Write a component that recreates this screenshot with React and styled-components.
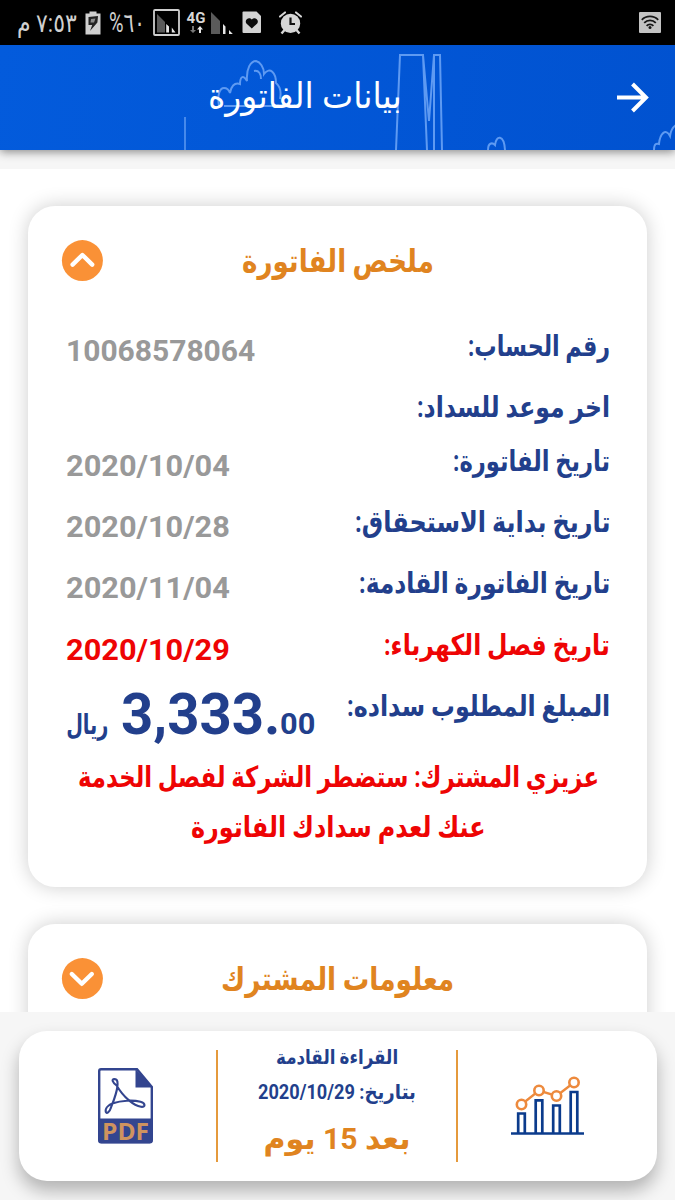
import React, { useLayoutEffect, useRef, useState } from 'react';
import { styled, createGlobalStyle } from 'styled-components';

const colors = {
	blue: '#223f8c',
	red: '#ee0404',
	grey: '#999999',
	orange: '#e08420',
	badge: '#fa9136',
};

const rows = [
	{ label: 'رقم الحساب:', labelWidth: 142, value: '10068578064', valueWidth: 189, height: 61 },
	{ label: 'اخر موعد للسداد:', labelWidth: 193, height: 54 },
	{ label: 'تاريخ الفاتورة:', labelWidth: 157, value: '2020/10/04', valueWidth: 163.5, height: 61 },
	{ label: 'تاريخ بداية الاستحقاق:', labelWidth: 255, value: '2020/10/28', valueWidth: 163.5, height: 61 },
	{ label: 'تاريخ الفاتورة القادمة:', labelWidth: 251, value: '2020/11/04', valueWidth: 163.5, height: 62 },
	{ label: 'تاريخ فصل الكهرباء:', labelWidth: 226, value: '2020/10/29', valueWidth: 163.5, height: 61, alert: true },
];

// squeezes or widens one line of text so that it takes exactly `width` pixels
const FitText = ({ width, ltr, children }) => {
	const ref = useRef(null);
	const [scale, setScale] = useState(1);

	useLayoutEffect(() => {
		setScale(width / ref.current.offsetWidth);
	}, [width]);

	return (
		<FitBox $width={width} dir={ltr ? 'ltr' : 'rtl'}>
			<FitInner ref={ref} $ltr={ltr} style={{ transform: `scaleX(${scale})` }}>
				{children}
			</FitInner>
		</FitBox>
	);
};

const SignalIcon = () => (
	<svg width="27" height="27" viewBox="0 0 27 27">
		<rect x="1" y="1" width="25" height="25" rx="1" fill="none" stroke="#cfcfcf" strokeWidth="1.8" />
		<path d="M4 5 L12 13 V23.5 H4Z" fill="#5a5a5a" />
		<path d="M13.2 15 L16 17.5 V23.5 H13.2Z M18.8 18.5 L22.5 23.5 H18.8Z" fill="#e6e6e6" />
	</svg>
);

const PlainSignalIcon = () => (
	<svg width="23" height="24" viewBox="0 0 23 24">
		<path d="M0 1 L9 10 V23 H0Z" fill="#5a5a5a" />
		<path d="M12 13 L14.5 15.5 V23 H12Z M18 19 L21.8 23 H18Z" fill="#e6e6e6" />
	</svg>
);

const BatteryIcon = () => (
	<svg width="16" height="24" viewBox="0 0 16 24">
		<path d="M4.5 0.5 h7 v2 h4 v21 H0.5 V2.5 h4Z" fill="#cfcfcf" />
		<path d="M3.5 6 L13 5 L12.4 11.5 L5 20 L7.2 14 H3.5Z" fill="#222" />
		<path d="M6 8 L10.5 7.4 L9 11.5 H5.5Z" fill="#8b8b8b" />
	</svg>
);

const HeartCardIcon = () => (
	<svg width="20" height="23" viewBox="0 0 20 23">
		<path d="M1.5 0.5 H14.5 L19 5 V21 Q19 22 18 22 H1.5 Q0.5 22 0.5 21 V1.5 Q0.5 0.5 1.5 0.5Z" fill="#d2d2d2" />
		<path d="M9.8 17.5 L4.4 12.4 C2 9.2 6.8 5 9.8 8.4 C12.8 5 17.6 9.2 15.2 12.4Z" fill="#0a0a0a" />
	</svg>
);

const AlarmIcon = () => (
	<svg width="23" height="24" viewBox="0 0 23 24">
		<path d="M1 5.6 L6 1.4 M22 5.6 L17 1.4" stroke="#d6d6d6" strokeWidth="2" strokeLinecap="round" />
		<path d="M5.5 19 L2.5 22.5 M17.5 19 L20.5 22.5" stroke="#d6d6d6" strokeWidth="2.4" />
		<circle cx="11.5" cy="12.4" r="9.7" fill="#d6d6d6" />
		<path d="M11.5 6.5 V13 H16" fill="none" stroke="#111" strokeWidth="2.2" />
	</svg>
);

const WifiIcon = () => (
	<svg width="22" height="21" viewBox="0 0 22 21">
		<rect width="22" height="21" rx="1" fill="#c3c3c3" />
		<g fill="none" stroke="#161616" strokeWidth="1.8">
			<path d="M2.8 7.8 C7.2 3.2 14.8 3.2 19.2 7.8" />
			<path d="M5.2 10.9 C8.4 7.5 13.6 7.5 16.8 10.9" />
			<path d="M7.6 13.8 C9.5 11.8 12.5 11.8 14.4 13.8" />
		</g>
		<circle cx="11" cy="15.6" r="1.5" fill="#161616" />
	</svg>
);

const Skyline = () => (
	<SkylineSvg viewBox="0 0 675 105">
		<g fill="none" stroke="#5e9af2" strokeWidth="2">
			<path d="M185 72 V105" strokeWidth="1.5" />
			<path d="M219 61 C217 49 220 43 224 43 C227 43 229 45 230 48 C231 42 234 37 240 39 C240 32 243 29 247 36 C246 23 251 16 256 16 C260 17 264 22 264 29 C270 21 276 28 276 38 C281 42 281 49 280 54 M254 26 C259 25 261 29 261 34 M224 61 H278" />
			<path d="M396 105 L400 10 H423 L427 105 M423 10 L429 76 L434 10 H440 L442 105 M434 10 V105" />
			<path d="M488 105 C488 98 492 97 495 100 C496 90 504 89 505 105" />
			<path d="M654 105 C654 99 656 98 659 99 C660 88 666 83 670 91 C671 84 673 82 676 80" />
		</g>
	</SkylineSvg>
);

const ArrowIcon = () => (
	<svg width="33" height="32" viewBox="0 0 33 32">
		<path d="M1 15.5 H29.5 M16.5 2 L30 15.5 L16.5 29" fill="none" stroke="#fff" strokeWidth="4" />
	</svg>
);

const ToggleIcon = ({ open }) => (
	<svg width="42" height="42" viewBox="0 0 42 42">
		<circle cx="21.4" cy="20.6" r="20.5" fill={colors.badge} />
		<path
			d={open ? 'M11.6 24.6 L21.4 15 L31.2 24.6' : 'M10.8 16 L20.8 25.8 L30.8 16'}
			fill="none"
			stroke="#fff"
			strokeWidth="4.4"
			strokeLinecap="round"
			strokeLinejoin="round"
		/>
	</svg>
);

const PdfIcon = () => (
	<svg width="55" height="84" viewBox="0 -4 55 84">
		<path
			d="M3 1.2 H39 L53.8 19 V72 Q53.8 74.3 51.8 74.3 H3 Q1.2 74.3 1.2 72 V3 Q1.2 1.2 3 1.2Z"
			fill="#fff"
			stroke="#33458f"
			strokeWidth="2.4"
		/>
		<path d="M37.5 1 L54.5 19.5 H37.5Z" fill="#33458f" />
		<path d="M0.5 50.5 H54.5 V72.5 Q54.5 75.2 51.5 75.2 H3.5 Q0.5 75.2 0.5 72.5Z" fill="#33458f" />
		<path
			d="M18.6 17.5 C14 14 13.5 11.3 16.3 11 C20 11 19.8 15 19.3 19 C18.5 26 15.5 33 12.8 40 C11.5 44.5 8.5 46 7.8 44 C6.8 40 11 36.8 15 35.3 C23 32.5 35 31.8 42.5 33.8 C48 35.5 47.5 39.5 43 38.8 C36 37.5 26 30 18.6 17.5Z"
			fill="none"
			stroke="#33458f"
			strokeWidth="2.1"
		/>
		<text x="27.5" y="71.5" textAnchor="middle" textLength="47" lengthAdjust="spacingAndGlyphs">
			PDF
		</text>
	</svg>
);

const ChartIcon = () => (
	<svg width="73" height="60" viewBox="0 0 73 60">
		<g fill="none" stroke="#0b3b8c" strokeWidth="2.7">
			<path d="M0 57.5 H73" />
			<path d="M7.2 57 V37.5 H13.8 V57 M24.7 57 V24.3 H31.3 V57 M42.2 57 V29.5 H48.8 V57 M59.7 57 V16 H66.3 V57" />
		</g>
		<path d="M10.5 28.5 L28 14.5 L45.5 20 L63 6.5" fill="none" stroke="#ed8a3d" strokeWidth="2.4" />
		<g fill="#fff" stroke="#ed8a3d" strokeWidth="2.6">
			<circle cx="10.5" cy="28.5" r="4.7" />
			<circle cx="28" cy="14.5" r="4.7" />
			<circle cx="45.5" cy="20" r="4.7" />
			<circle cx="63" cy="6.5" r="4.7" />
		</g>
	</svg>
);

const App = () => {
	return (
		<Screen>
			<GlobalStyle />

			<StatusBar>
				<StatusGroup>
					<StatusText $size={26} $ml={17}>
						<FitText width={60}>٧:٥٣ م</FitText>
					</StatusText>
					<BatteryIcon />
					<StatusText $size={27}>
						<FitText width={36} ltr>
							%٦٠
						</FitText>
					</StatusText>
					<SignalIcon />
					<Network>
						4G
						<svg width="13" height="9" viewBox="0 0 13 9">
							<path d="M3 7 L0 4 H2 V0 H4 V4 H6Z" fill="#777" />
							<path d="M10 0 L13 3.4 H11 V7 H9 V3.4 H7Z" fill="#e6e6e6" />
						</svg>
					</Network>
					<PlainSignalIcon />
					<HeartCardIcon />
					<AlarmIcon />
				</StatusGroup>
				<WifiIcon />
			</StatusBar>

			<Header>
				<Skyline />
				<HeaderTitle>
					<FitText width={194}>بيانات الفاتورة</FitText>
				</HeaderTitle>
				<ArrowIcon />
			</Header>

			<Content>
				<Card>
					<CardHead>
						<ToggleIcon open />
						<CardTitle>
							<FitText width={192}>ملخص الفاتورة</FitText>
						</CardTitle>
					</CardHead>

					{rows.map((row) => (
						<Row key={row.label} $height={row.height} $alert={row.alert}>
							<Label>
								<FitText width={row.labelWidth}>{row.label}</FitText>
							</Label>
							{row.value && (
								<Value>
									<FitText width={row.valueWidth} ltr>
										{row.value}
									</FitText>
								</Value>
							)}
						</Row>
					))}

					<Row $height={61}>
						<Label>
							<FitText width={263}>المبلغ المطلوب سداده:</FitText>
						</Label>
						<Amount>
							<Currency>
								<FitText width={42}>ريال</FitText>
							</Currency>
							<Whole>
								<FitText width={159} ltr>
									3,333.
								</FitText>
							</Whole>
							<Fraction>
								<FitText width={35} ltr>
									00
								</FitText>
							</Fraction>
						</Amount>
					</Row>

					<Warning>
						<FitText width={521}>عزيزي المشترك: ستضطر الشركة لفصل الخدمة</FitText>
						<FitText width={295}>عنك لعدم سدادك الفاتورة</FitText>
					</Warning>
				</Card>

				<Card>
					<CardHead>
						<ToggleIcon />
						<CardTitle>
							<FitText width={233}>معلومات المشترك</FitText>
						</CardTitle>
					</CardHead>
				</Card>
			</Content>

			<Footer>
				<FooterCard>
					<FooterCell>
						<PdfIcon />
					</FooterCell>
					<Reading>
						<ReadingLine>
							<FitText width={122}>القراءة القادمة</FitText>
						</ReadingLine>
						<ReadingLine>
							<FitText width={158}>بتاريخ: 2020/10/29</FitText>
						</ReadingLine>
						<Remaining>
							<FitText width={147}>بعد 15 يوم</FitText>
						</Remaining>
					</Reading>
					<FooterCell>
						<ChartIcon />
					</FooterCell>
				</FooterCard>
			</Footer>
		</Screen>
	);
};

const GlobalStyle = createGlobalStyle`
	* {
		box-sizing: border-box;
	}
	body {
		margin: 0;
		overflow: hidden;
		background: #fff;
		font-family: Roboto, 'DejaVu Sans', sans-serif;
	}
	svg {
		display: block;
		flex-shrink: 0;
	}
`;

const FitBox = styled.span`
	display: block;
	width: ${({ $width }) => $width}px;
	white-space: nowrap;
`;

const FitInner = styled.span`
	display: inline-block;
	transform-origin: ${({ $ltr }) => ($ltr ? 'left' : 'right')} center;
`;

const Screen = styled.div`
	width: 675px;
	height: 1200px;
	display: flex;
	flex-direction: column;
	overflow: hidden;
	background: #f6f6f6;
`;

const StatusBar = styled.div`
	height: 45px;
	flex-shrink: 0;
	display: flex;
	align-items: center;
	justify-content: space-between;
	padding-right: 14px;
	background: #000;
`;

const StatusGroup = styled.div`
	display: flex;
	align-items: center;
	gap: 8px;

	& > svg:last-child {
		margin-left: 9px;
	}
`;

const StatusText = styled.div`
	margin-left: ${({ $ml = 0 }) => $ml}px;
	font-size: ${({ $size }) => $size}px;
	line-height: 40px;
	color: #d0d0d0;
`;

const Network = styled.div`
	width: 20px;
	margin: 0 -3px 0 -2px;
	display: flex;
	flex-direction: column;
	align-items: center;
	font-size: 15px;
	font-weight: 700;
	line-height: 14px;
	color: #d8d8d8;

	svg {
		margin-top: 1px;
	}
`;

const Header = styled.header`
	position: relative;
	z-index: 2;
	height: 105px;
	flex-shrink: 0;
	display: flex;
	align-items: center;
	justify-content: space-between;
	padding: 0 26px 0 208px;
	background: linear-gradient(100deg, #035bdc, #0152d0);
	box-shadow: 0 2px 9px rgba(0, 0, 0, 0.45);
`;

const SkylineSvg = styled.svg`
	position: absolute;
	inset: 0;
	width: 675px;
	height: 105px;
`;

const HeaderTitle = styled.div`
	position: relative;
	padding-bottom: 2px;
	font-size: 35px;
	line-height: 60px;
	color: #fff;
`;

const Content = styled.main`
	height: 843px;
	margin-top: 19px;
	flex-shrink: 0;
	padding: 37px 28px 0;
	display: flex;
	flex-direction: column;
	gap: 37px;
	overflow: hidden;
	background: #fff;
`;

const Card = styled.section`
	height: 681px;
	flex-shrink: 0;
	padding: 34px 37px 0 38px;
	background: #fff;
	border-radius: 27px;
	box-shadow: 0 0 20px rgba(0, 0, 0, 0.2);
`;

const CardHead = styled.div`
	height: 77px;
	margin-left: -5px;
	display: flex;
	align-items: flex-start;
`;

const CardTitle = styled.h2`
	flex: 1;
	display: flex;
	justify-content: center;
	margin: 0 38px 0 0;
	font-size: 32px;
	line-height: 42px;
	color: ${colors.orange};
`;

const Row = styled.div`
	height: ${({ $height }) => $height}px;
	display: flex;
	flex-direction: row-reverse;
	align-items: flex-start;
	justify-content: space-between;
	color: ${({ $alert }) => ($alert ? colors.red : colors.blue)};

	& > div:last-child {
		color: ${({ $alert }) => $alert && colors.red};
	}
`;

const Label = styled.div`
	font-size: 29px;
	font-weight: 700;
	line-height: 58px;
`;

const Value = styled.div`
	padding-top: 4px;
	font-size: 29.5px;
	font-weight: 700;
	line-height: 60px;
	color: ${colors.grey};
`;

const Amount = styled.div`
	display: flex;
	align-items: baseline;
	padding-top: 4px;
	font-weight: 700;
	line-height: 68px;
`;

const Currency = styled.div`
	margin-right: 13px;
	font-size: 28px;
`;

const Whole = styled.div`
	font-size: 57px;
`;

const Fraction = styled.div`
	font-size: 29px;
`;

const Warning = styled.div`
	margin: 14px 0 0 1px;
	display: flex;
	flex-direction: column;
	align-items: center;
	font-size: 29px;
	font-weight: 700;
	line-height: 50px;
	color: ${colors.red};
`;

const Footer = styled.footer`
	flex: 1;
	padding: 19px 18px 19px 19px;
`;

const FooterCard = styled.div`
	height: 150px;
	display: grid;
	grid-template-columns: 197px 242px 1fr;
	align-items: center;
	background: #fff;
	border-radius: 28px;
	box-shadow: 0 10px 18px rgba(0, 0, 0, 0.28);
`;

const FooterCell = styled.div`
	display: flex;
	justify-content: center;
	padding-left: 16px;

	&:last-child {
		padding-left: 0;
		padding-right: 21px;
	}

	text {
		font-family: 'Open Sans', sans-serif;
		font-size: 24px;
		font-weight: 700;
		fill: #cf935f;
	}
`;

const Reading = styled.div`
	height: 112px;
	display: flex;
	flex-direction: column;
	align-items: center;
	border-left: 2px solid #e59a3c;
	border-right: 2px solid #e59a3c;
`;

const ReadingLine = styled.div`
	height: 35px;
	font-size: 20px;
	font-weight: 700;
	line-height: 15px;
	color: ${colors.blue};
`;

const Remaining = styled.div`
	font-size: 30px;
	font-weight: 700;
	line-height: 38px;
	color: ${colors.orange};
`;

export default App;
